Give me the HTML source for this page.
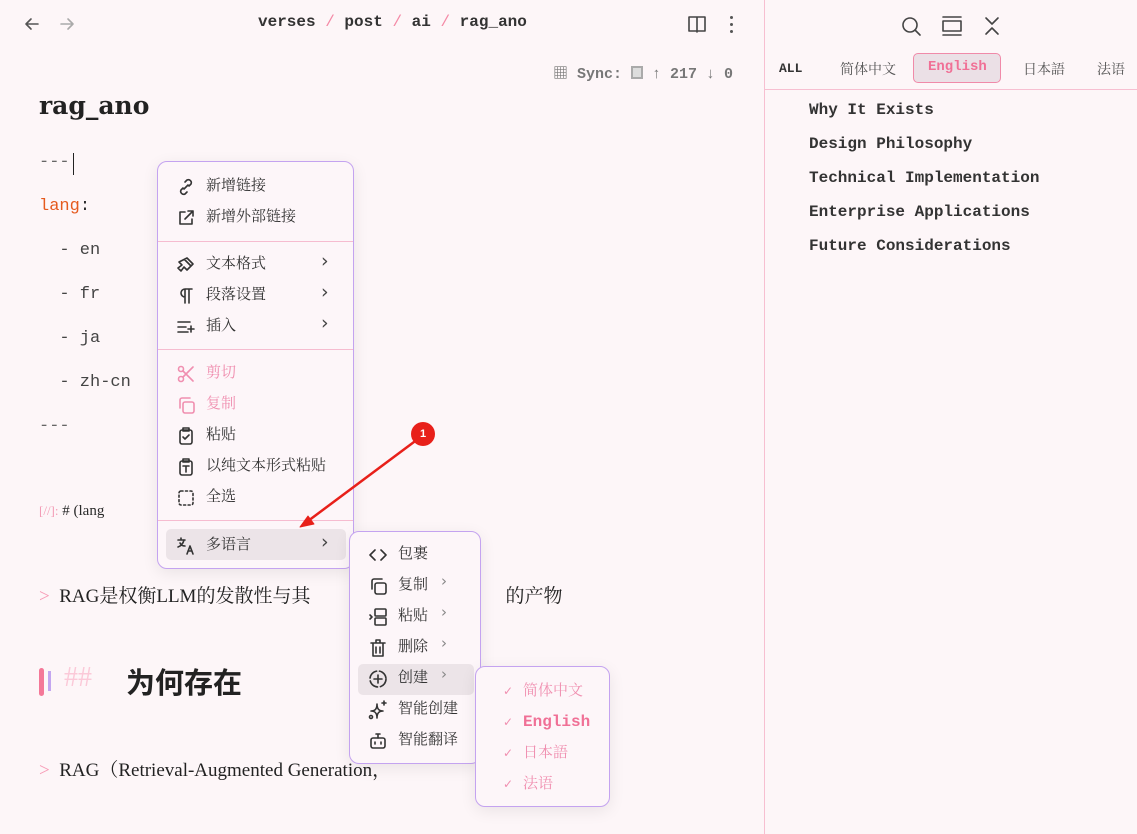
<!DOCTYPE html>
<html><head><meta charset="utf-8"><style>
*{margin:0;padding:0;box-sizing:border-box}
body{width:1137px;height:834px;background:#fdf6f8;font-family:"Liberation Mono","Noto Sans CJK SC",monospace;color:#2a2a2a;position:relative;overflow:hidden}
.a{position:absolute;white-space:pre}
.mono{font-family:"Liberation Mono","Noto Sans CJK SC",monospace}
.serif{font-family:"Liberation Serif","Noto Serif CJK SC",serif}
.menu{position:absolute;background:#fdf6f9;border:1px solid #c4a3f0;border-radius:10px;box-shadow:0 4px 16px rgba(0,0,0,.08);font-family:"Liberation Serif","Noto Serif CJK SC",serif;font-size:15px;color:#333}
.it{position:absolute;height:28px;line-height:28px;white-space:nowrap}
.it svg{position:absolute;left:0;top:5px}
.sep{position:absolute;left:0;right:0;height:1px;background:#f6bcd0}
.pink{color:#f08fb0}
.chev{position:absolute;font-family:"DejaVu Sans";font-size:19px;color:#444}
.ck{font-family:"DejaVu Sans";font-size:12px;font-weight:bold}
svg{fill:none;stroke:#333;stroke-width:1.6;stroke-linecap:round;stroke-linejoin:round}
</style></head><body>
<div class="a" style="left:764px;top:0;width:1px;height:834px;background:#f7bfd1"></div>
<div class="a" style="left:765px;top:89px;width:372px;height:1px;background:#f7bfd1"></div>

<svg class="a" style="left:22px;top:14px" width="20" height="20" viewBox="0 0 20 20"><path d="M16 10H4M9 5l-5 5 5 5" stroke="#555"/></svg>
<svg class="a" style="left:57px;top:14px" width="20" height="20" viewBox="0 0 20 20"><path d="M4 10h12M11 5l5 5-5 5" stroke="#aaa"/></svg>
<div class="a mono" style="left:258px;top:13px;font-size:16px;font-weight:bold;color:#333">verses <span style="color:#f48aa6;font-weight:normal">/</span> post <span style="color:#f48aa6;font-weight:normal">/</span> ai <span style="color:#f48aa6;font-weight:normal">/</span> rag_ano</div>
<svg class="a" style="left:686px;top:14px" width="22" height="20" viewBox="0 0 22 20"><path d="M11 4v14M3 3h8v14H3zM11 3h8v14h-8" stroke="#444"/></svg>
<div class="a" style="left:730px;top:16px;width:4px;height:18px"><div style="width:3px;height:3px;background:#555;border-radius:50%;margin-bottom:4px"></div><div style="width:3px;height:3px;background:#555;border-radius:50%;margin-bottom:4px"></div><div style="width:3px;height:3px;background:#555;border-radius:50%"></div></div>

<div class="a mono" style="left:553px;top:62px;font-size:15px;color:#777;font-weight:bold">▦ Sync: <span style="display:inline-block;width:12px;height:13px;border:2px solid #aaa;background:#ddd;vertical-align:-1px"></span> ↑ 217 ↓ 0</div>

<div class="a" style="left:39px;top:91px;font-size:25px;font-weight:bold;color:#222;font-family:'DejaVu Serif',serif">rag_ano</div>
<div class="a mono" style="left:39px;top:153px;font-size:17px;color:#666">---</div>
<div class="a" style="left:73px;top:153px;width:1px;height:22px;background:#222"></div>
<div class="a mono" style="left:39px;top:197px;font-size:17px"><span style="color:#e55a1e">lang</span>:</div>
<div class="a mono" style="left:39px;top:241px;font-size:17px;color:#444">  - en</div>
<div class="a mono" style="left:39px;top:285px;font-size:17px;color:#444">  - fr</div>
<div class="a mono" style="left:39px;top:329px;font-size:17px;color:#444">  - ja</div>
<div class="a mono" style="left:39px;top:373px;font-size:17px;color:#444">  - zh-cn</div>
<div class="a mono" style="left:39px;top:417px;font-size:17px;color:#666">---</div>
<div class="a serif" style="left:39px;top:503px;font-size:15px"><span style="color:#f39bb5;font-size:13px">[//]:</span> # (lang</div>
<div class="a serif" style="left:39px;top:581px;font-size:19px;color:#222"><span style="color:#f79ab5">&gt;</span>  RAG是权衡LLM的发散性与其<span style="display:inline-block;width:195px"></span>的产物</div>
<div class="a" style="left:39px;top:668px;width:5px;height:28px;background:#f47898;border-radius:3px"></div>
<div class="a" style="left:48px;top:671px;width:3px;height:20px;background:#c3a6f0"></div>
<div class="a serif" style="left:64px;top:662px;font-size:28px;color:#fbc9d8">##</div>
<div class="a" style="left:126px;top:660px;font-size:29px;font-weight:bold;font-family:'Noto Sans CJK SC',sans-serif;color:#222">为何存在</div>
<div class="a serif" style="left:39px;top:755px;font-size:19px;color:#222"><span style="color:#f79ab5">&gt;</span>  RAG（Retrieval-Augmented Generation，<span style="display:inline-block;width:130px"></span>文）</div>

<svg class="a" style="left:900px;top:15px" width="24" height="24" viewBox="0 0 24 24"><circle cx="10" cy="10" r="7" stroke="#444"/><path d="M15 15l5 5" stroke="#444"/></svg>
<svg class="a" style="left:940px;top:14px" width="24" height="24" viewBox="0 0 24 24"><path d="M3 3h18M3 21h18M3 7h18v10H3z" stroke="#444"/></svg>
<svg class="a" style="left:982px;top:15px" width="20" height="22" viewBox="0 0 20 22"><path d="M4 3l6 6 6-6M4 19l6-6 6 6" stroke="#444"/></svg>
<div class="a mono" style="left:779px;top:61px;font-size:13px;font-weight:bold;color:#333">ALL</div>
<div class="a serif" style="left:840px;top:59px;font-size:14px;color:#555">简体中文</div>
<div class="a" style="left:913px;top:53px;width:88px;height:30px;border:1px solid #f08aa9;border-radius:5px;background:#ebe0e6"></div>
<div class="a mono" style="left:928px;top:59px;font-size:14px;font-weight:bold;color:#f07096">English</div>
<div class="a serif" style="left:1023px;top:59px;font-size:14px;color:#555">日本語</div>
<div class="a serif" style="left:1097px;top:59px;font-size:14px;color:#555">法语</div>
<div class="a mono" style="left:809px;top:93px;font-size:16px;font-weight:bold;color:#333;line-height:34px">Why It Exists
Design Philosophy
Technical Implementation
Enterprise Applications
Future Considerations</div>

<div class="menu" style="left:157px;top:161px;width:197px;height:408px">
 <div class="it" style="left:18px;top:10px;padding-left:30px"><svg width="20" height="20" viewBox="0 0 20 20"><path d="M8 12l4-4M9 5l2-2a3 3 0 014 4l-2 2M11 15l-2 2a3 3 0 01-4-4l2-2"/></svg>新增链接</div>
 <div class="it" style="left:18px;top:41px;padding-left:30px"><svg width="20" height="20" viewBox="0 0 20 20"><path d="M9 4H4v12h12v-5M12 3h5v5M17 3l-8 8"/></svg>新增外部链接</div>
 <div class="sep" style="top:79px"></div>
 <div class="it" style="left:18px;top:88px;padding-left:30px"><svg width="20" height="20" viewBox="0 0 20 20"><path d="M11 3l6 6-6 6-3-3-3 4-3-3 4-3-3-3zM9 5l6 6"/></svg>文本格式</div>
 <div class="it" style="left:18px;top:119px;padding-left:30px"><svg width="20" height="20" viewBox="0 0 20 20"><path d="M9 17V3h7M13 3v14M9 3a4 4 0 000 8"/></svg>段落设置</div>
 <div class="it" style="left:18px;top:150px;padding-left:30px"><svg width="20" height="20" viewBox="0 0 20 20"><path d="M2 5h12M2 10h8M2 15h10M15 9v6M12 12h6"/></svg>插入</div>
 <div class="chev" style="left:163px;top:88px">›</div><div class="chev" style="left:163px;top:119px">›</div><div class="chev" style="left:163px;top:150px">›</div>
 <div class="sep" style="top:187px"></div>
 <div class="it pink" style="left:18px;top:197px;padding-left:30px"><svg width="20" height="20" viewBox="0 0 20 20" style="stroke:#f08fb0"><circle cx="5" cy="5" r="2.5"/><circle cx="5" cy="15" r="2.5"/><path d="M7 7l10 10M7 13L17 3"/></svg>剪切</div>
 <div class="it pink" style="left:18px;top:228px;padding-left:30px"><svg width="20" height="20" viewBox="0 0 20 20" style="stroke:#f08fb0"><rect x="7" y="7" width="11" height="11" rx="2"/><path d="M4 13V5a2 2 0 012-2h8"/></svg>复制</div>
 <div class="it" style="left:18px;top:259px;padding-left:30px"><svg width="20" height="20" viewBox="0 0 20 20"><rect x="4" y="4" width="12" height="14" rx="2"/><rect x="7" y="2" width="6" height="3"/><path d="M7 11l2 2 4-4"/></svg>粘贴</div>
 <div class="it" style="left:18px;top:290px;padding-left:30px"><svg width="20" height="20" viewBox="0 0 20 20"><rect x="4" y="4" width="12" height="14" rx="2"/><rect x="7" y="2" width="6" height="3"/><path d="M7 9h6M10 9v6"/></svg>以纯文本形式粘贴</div>
 <div class="it" style="left:18px;top:321px;padding-left:30px"><svg width="20" height="20" viewBox="0 0 20 20"><rect x="3" y="3" width="14" height="14" rx="2" stroke-dasharray="2 2.5"/></svg>全选</div>
 <div class="sep" style="top:358px"></div>
 <div style="position:absolute;left:8px;top:367px;width:180px;height:31px;background:#ece4e8;border-radius:5px"></div>
 <div class="it" style="left:18px;top:369px;padding-left:30px"><svg width="20" height="20" viewBox="0 0 20 20"><path d="M2 4h7M5 2v2M8 4c-1 4-3 6-6 7M4 7c1 2 3 3 5 3M11 18l3-8 3 8M12 15h4"/></svg>多语言</div>
 <div class="chev" style="left:163px;top:369px">›</div>
</div>

<div class="menu" style="left:349px;top:531px;width:132px;height:233px">
 <div style="position:absolute;left:8px;top:132px;width:116px;height:31px;background:#ece4e8;border-radius:5px"></div>
 <div class="it" style="left:18px;top:8px;padding-left:30px"><svg width="20" height="20" viewBox="0 0 20 20"><path d="M7 5l-5 5 5 5M13 5l5 5-5 5"/></svg>包裹</div>
 <div class="it" style="left:18px;top:39px;padding-left:30px"><svg width="20" height="20" viewBox="0 0 20 20"><rect x="7" y="7" width="11" height="11" rx="2"/><path d="M4 13V5a2 2 0 012-2h8"/></svg>复制</div>
 <div class="it" style="left:18px;top:70px;padding-left:30px"><svg width="20" height="20" viewBox="0 0 20 20"><rect x="7" y="2" width="11" height="7" rx="1"/><rect x="7" y="11" width="11" height="7" rx="1"/><path d="M2 8l2 2-2 2"/></svg>粘贴</div>
 <div class="it" style="left:18px;top:101px;padding-left:30px"><svg width="20" height="20" viewBox="0 0 20 20"><path d="M3 5h14M8 5V2h4v3M5 5v13h10V5M8 9v6M12 9v6"/></svg>删除</div>
 <div class="it" style="left:18px;top:132px;padding-left:30px"><svg width="20" height="20" viewBox="0 0 20 20"><circle cx="10" cy="10" r="8" stroke-dasharray="10 3"/><path d="M10 6v8M6 10h8"/></svg>创建</div>
 <div class="it" style="left:18px;top:163px;padding-left:30px"><svg width="20" height="20" viewBox="0 0 20 20"><path d="M9 4c0 5-2 7-6 7 4 0 6 2 6 7 0-5 2-7 6-7-4 0-6-2-6-7zM16 1v4M14 3h4"/><circle cx="3" cy="17" r="1.5"/></svg>智能创建</div>
 <div class="it" style="left:18px;top:194px;padding-left:30px"><svg width="20" height="20" viewBox="0 0 20 20"><rect x="3" y="7" width="14" height="10" rx="2"/><path d="M10 3v4M8 3h4M7 11v2M13 11v2"/></svg>智能翻译</div>
 <div class="chev" style="left:91px;top:40px;color:#888;font-size:15px">›</div><div class="chev" style="left:91px;top:71px;color:#888;font-size:15px">›</div><div class="chev" style="left:91px;top:102px;color:#888;font-size:15px">›</div><div class="chev" style="left:91px;top:133px;color:#888;font-size:15px">›</div>
</div>

<div class="menu" style="left:475px;top:666px;width:135px;height:141px">
 <div class="it pink ck" style="left:27px;top:10px">✓</div><div class="it pink" style="left:47px;top:10px">简体中文</div>
 <div class="it pink ck" style="left:27px;top:41px">✓</div><div class="it" style="left:47px;top:41px;color:#f07096;font-family:'Liberation Mono';font-weight:bold;font-size:16px">English</div>
 <div class="it pink ck" style="left:27px;top:72px">✓</div><div class="it pink" style="left:47px;top:72px">日本語</div>
 <div class="it pink ck" style="left:27px;top:103px">✓</div><div class="it pink" style="left:47px;top:103px">法语</div>
</div>

<svg class="a" style="left:290px;top:420px;overflow:visible" width="150" height="110" viewBox="0 0 150 110"><path d="M132 16L14 104" stroke="#e8201a" stroke-width="2.5"/><path d="M10 107l14-3-6-8z" fill="#e8201a" stroke="#e8201a" stroke-width="1"/></svg>
<div class="a" style="left:411px;top:422px;width:24px;height:24px;border-radius:50%;background:#e8201a;color:#fff;font:bold 11px 'Liberation Sans';text-align:center;line-height:24px">1</div>
</body></html>
